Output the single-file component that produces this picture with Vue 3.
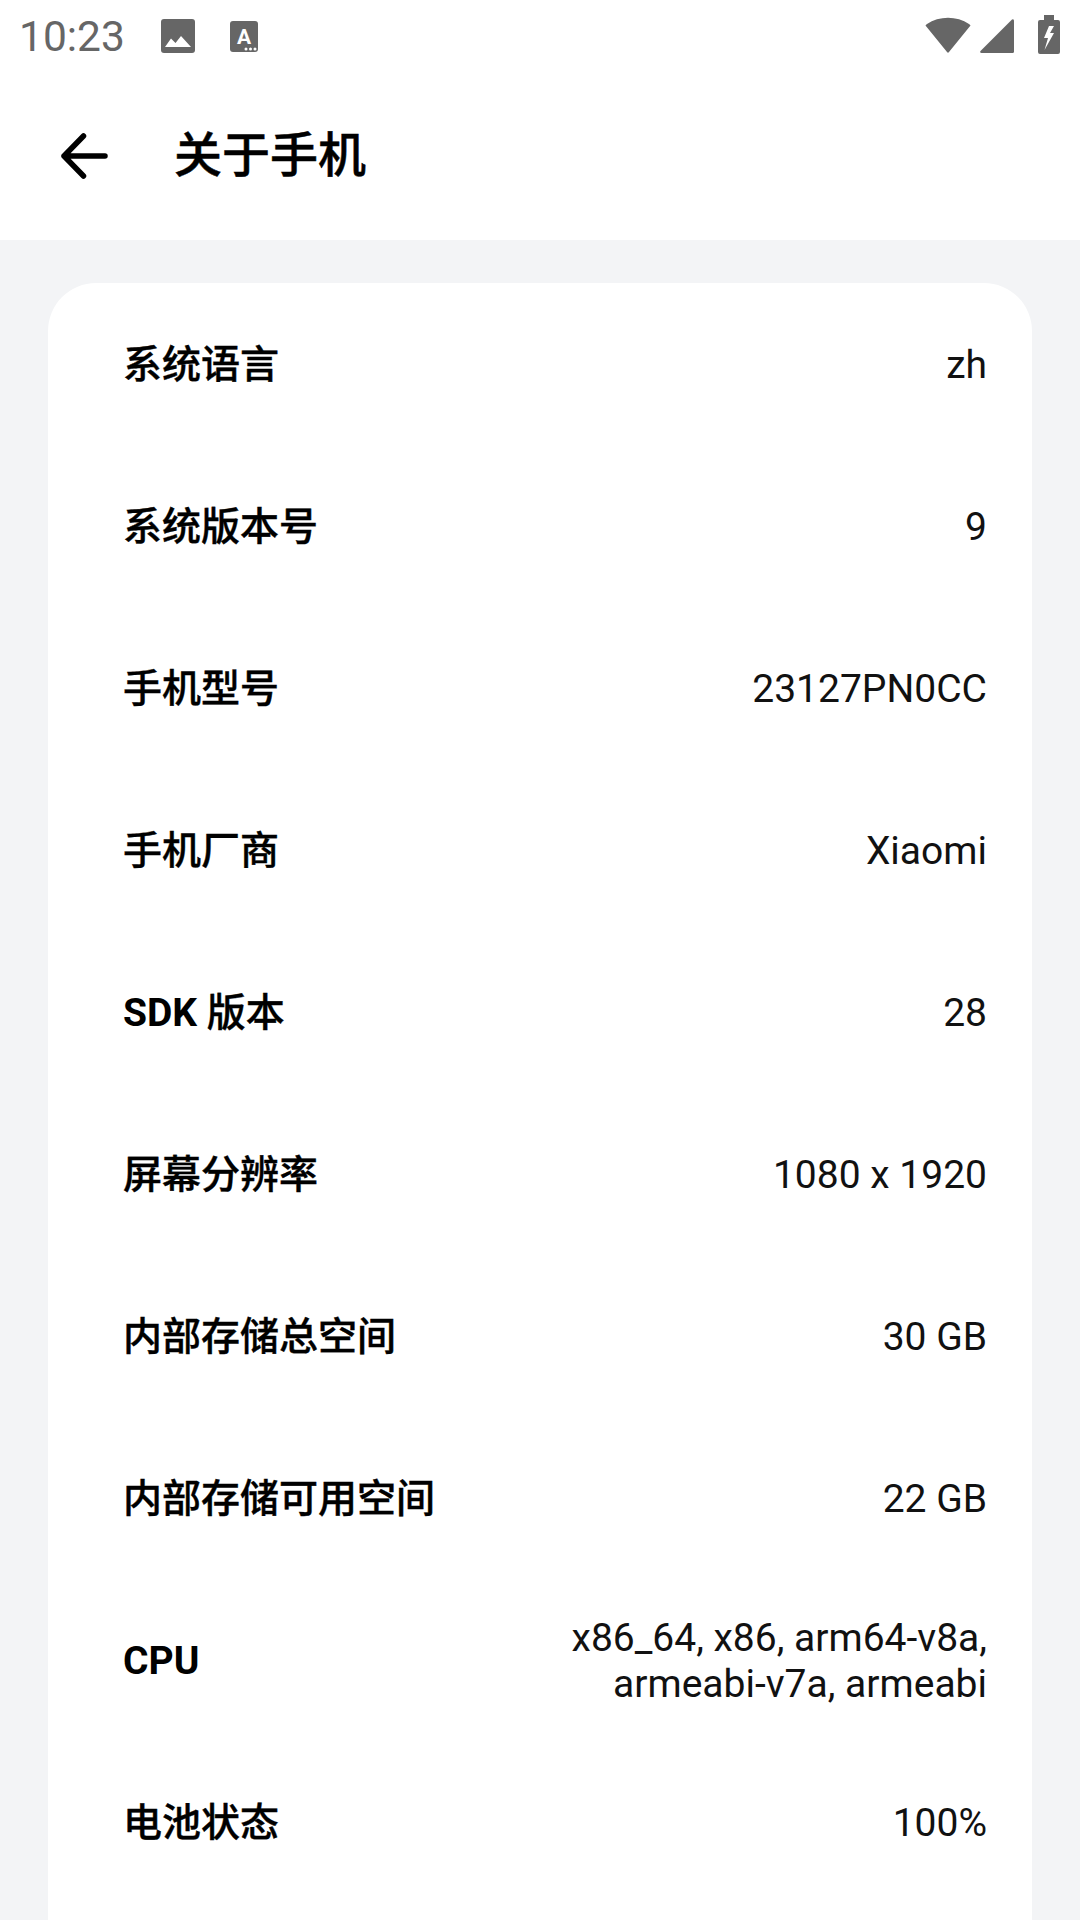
<template>
  <div class="page">
    <div class="status-bar">
      <span class="time">10:23</span>
      <svg class="ic-image" width="34" height="34" viewBox="0 0 34 34">
        <rect width="34" height="34" rx="3" fill="#666" />
        <path d="M4 28 L10 19.500 L14.500 24 L20 17 L30 28 Z" fill="#fff" />
      </svg>
      <svg class="ic-text" width="28" height="31" viewBox="0 0 28 31">
        <rect width="28" height="31" rx="3" fill="#666" />
        <text x="14" y="23" class="ic-letter">A</text>
        <circle cx="16" cy="28" r="1.500" fill="#fff" />
        <circle cx="20.500" cy="28" r="1.500" fill="#fff" />
        <circle cx="25" cy="28" r="1.500" fill="#fff" />
      </svg>
      <div class="spacer"></div>
      <svg class="ic-wifi" width="46" height="36" viewBox="0 0 46 36">
        <path d="M0.500 8.500 Q1 7.500 2 7 C14 -1.500 32 -1.500 44 7 Q45 7.500 45.500 8.500 L24 35 Q23 36.500 22 35 Z" fill="#666" />
      </svg>
      <svg class="ic-signal" width="34" height="34" viewBox="0 0 34 34">
        <path d="M32 0.500 Q34 -0.500 34 2 V32.500 Q34 34 32.500 34 H1.500 Q-0.500 34 0.500 32 Z" fill="#666" />
      </svg>
      <svg class="ic-battery" width="22" height="39" viewBox="0 0 22 39">
        <path d="M6 0 H16 V5 H20 Q22 5 22 7 V37 Q22 39 20 39 H2 Q0 39 0 37 V7 Q0 5 2 5 H6 Z" fill="#666" />
        <path d="M11 11 L6 23 H10 L6.500 35 L16 18 H12 L16 11 Z" fill="#fff" />
      </svg>
    </div>

    <div class="toolbar">
      <svg class="back" width="48" height="48" viewBox="0 0 48 48">
        <path d="M45 24 H4 M23.500 4 L4 24 L23.500 44" fill="none" stroke="#000" stroke-width="5.500" stroke-linecap="round" stroke-linejoin="round" />
      </svg>
      <span class="title">关于手机</span>
    </div>

    <div class="content">
      <div class="card">
        <div v-for="row in rows" :key="row.label" class="row">
          <span class="label">
            <span v-for="part in splitLabel(row.label)" :key="part" :class="isLatin(part) ? 'latin' : 'cjk'">{{ part }}</span>
          </span>
          <span class="value">{{ row.value }}</span>
        </div>
      </div>
    </div>
  </div>
</template>

<script setup>
const rows = [
  { label: '系统语言', value: 'zh' },
  { label: '系统版本号', value: '9' },
  { label: '手机型号', value: '23127PN0CC' },
  { label: '手机厂商', value: 'Xiaomi' },
  { label: 'SDK 版本', value: '28' },
  { label: '屏幕分辨率', value: '1080 x 1920' },
  { label: '内部存储总空间', value: '30 GB' },
  { label: '内部存储可用空间', value: '22 GB' },
  { label: 'CPU', value: 'x86_64, x86, arm64-v8a,\narmeabi-v7a, armeabi' },
  { label: '电池状态', value: '100%' },
];

// latin letters are heavier than the CJK ones in the labels
const splitLabel = (s) => s.match(/[A-Za-z ]+|[^A-Za-z ]+/g);
const isLatin = (s) => /[A-Za-z]/.test(s);
</script>

<style>
html,
body {
  margin: 0;
  overflow: hidden;
}
</style>

<style scoped>
.page {
  width: 1080px;
  height: 1920px;
  overflow: hidden;
  background: #f3f4f6;
  font-family: Roboto, "Noto Sans CJK SC", sans-serif;
}

.status-bar {
  height: 72px;
  padding: 0 20px 0 19px;
  background: #fff;
  display: flex;
  align-items: center;
}

.time {
  font-size: 42.500px;
  color: #666;
  margin-right: 36px;
}

.ic-text {
  margin-left: 35px;
}

.ic-letter {
  font-size: 21px;
  font-weight: 700;
  fill: #fff;
  text-anchor: middle;
}

.spacer {
  flex: 1;
}

.ic-wifi {
  margin-top: -2px;
}

.ic-signal {
  margin-left: 9px;
  margin-right: 24px;
}

.ic-battery {
  margin-top: -3px;
}

.toolbar {
  height: 168px;
  background: #fff;
  display: flex;
  align-items: center;
  padding-left: 60px;
}

.back {
  margin-right: 68px;
}

.title {
  font-size: 48px;
  line-height: 56px;
  font-weight: 500;
  color: #000;
  margin-left: -2px;
  -webkit-text-stroke: 0.500px #000;
}

.content {
  padding: 43px 48px 0;
}

.card {
  background: #fff;
  border-radius: 48px;
  padding: 0 45px 200px 75px;
}

.row {
  box-sizing: border-box;
  min-height: 162px;
  padding-top: 2px;
  display: flex;
  align-items: center;
  justify-content: space-between;
}

.label {
  font-size: 39px;
  line-height: 46px;
  font-weight: 500;
  color: #000;
  white-space: pre;
}

.cjk {
  -webkit-text-stroke: 0.400px #000;
}

.latin {
  font-weight: 700;
}

.value {
  font-size: 39px;
  line-height: 46px;
  color: #111;
  text-align: right;
  white-space: pre-line;
}
</style>
